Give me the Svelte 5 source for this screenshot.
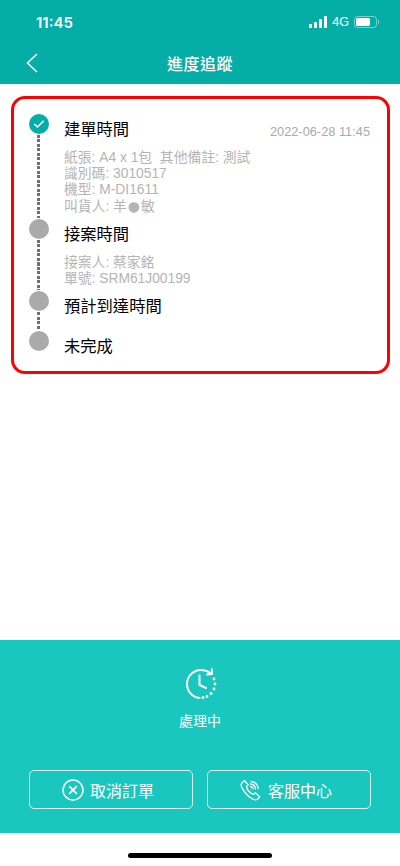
<script>
  const steps = [
    {
      title: "建單時間",
      done: true,
      time: "2022-06-28 11:45",
      lines: ["紙張: A4 x 1包  其他備註: 測試", "識別碼: 3010517", "機型: M-DI1611", "叫貨人: 羊●敏"],
    },
    { title: "接案時間", lines: ["接案人: 蔡家銘", "單號: SRM61J00199"] },
    { title: "預計到達時間", lines: [] },
    { title: "未完成", lines: [] },
  ];
</script>

<div class="page">
  <header>
    <div class="status">
      <span class="clock">11:45</span>
      <div class="indicators">
        <svg width="18" height="12" viewBox="0 0 18 12">
          <rect x="0" y="8" width="3" height="4" rx="0.7" fill="#fff" />
          <rect x="5" y="6" width="3" height="6" rx="0.7" fill="#fff" />
          <rect x="10" y="3" width="3" height="9" rx="0.7" fill="#fff" />
          <rect x="15" y="0" width="3" height="12" rx="0.7" fill="#fff" />
        </svg>
        <span class="net">4G</span>
        <svg width="26" height="12" viewBox="0 0 26 12">
          <rect x="0.5" y="0.5" width="22" height="11" rx="3" fill="none" stroke="#fff" stroke-opacity="0.45" />
          <rect x="2" y="2" width="14" height="8" rx="1.6" fill="#fff" />
          <path d="M24 4v4c.8-.3 1.3-1.100 1.300-2s-.5-1.700-1.300-2z" fill="#fff" fill-opacity="0.5" />
        </svg>
      </div>
    </div>
    <div class="nav">
      <svg class="back" width="12" height="20" viewBox="0 0 12 20">
        <path d="M11 1 1.500 10 11 19" fill="none" stroke="#fff" stroke-width="1.600" />
      </svg>
      <h1>進度追蹤</h1>
    </div>
  </header>

  <main>
    <section class="card">
      {#each steps as step, i}
        <div class="step">
          <div class="rail">
            <div class="dot" class:done={step.done}>
              {#if step.done}
                <svg width="12" height="10" viewBox="0 0 14 11">
                  <path d="M1.500 5.500 5.200 9 12.500 1.800" fill="none" stroke="#fff" stroke-width="1.800" />
                </svg>
              {/if}
            </div>
            {#if i < steps.length - 1}
              <div class="dash"></div>
            {/if}
          </div>
          <div class="body">
            <div class="head">
              <span class="title">{step.title}</span>
              {#if step.time}<span class="time">{step.time}</span>{/if}
            </div>
            {#if step.lines.length}
              <div class="lines">
                {#each step.lines as line}
                  <div>
                    {#each line.split("●") as part, j}{#if j}<span class="mask">●</span>{/if}{part}{/each}
                  </div>
                {/each}
              </div>
            {/if}
          </div>
        </div>
      {/each}
    </section>
  </main>

  <footer>
    <svg class="state-icon" width="32" height="32" viewBox="0 0 32 32" fill="none" stroke="#fff" stroke-width="2" stroke-linecap="round" stroke-linejoin="round">
      <path d="M14.500 30A14 14 0 0 1 2 16 14 14 0 0 1 16 2c3.500 0 7 1.200 10 3.500" />
      <path d="M26.800 1.200 27 6l-4.800.6" />
      <path d="M14.500 7.500V17l6.500 3" />
      <g fill="#fff" stroke="none">
        <circle cx="29" cy="11" r="1.400" />
        <circle cx="30" cy="16" r="1.400" />
        <circle cx="29" cy="21" r="1.400" />
        <circle cx="26" cy="25.500" r="1.400" />
        <circle cx="22" cy="28.500" r="1.400" />
        <circle cx="18" cy="29.700" r="1.400" />
      </g>
    </svg>
    <div class="state">處理中</div>
    <div class="actions">
      <button>
        <svg width="22" height="22" viewBox="0 0 22 22" fill="none" stroke="#fff" stroke-width="1.500">
          <circle cx="11" cy="11" r="10" />
          <path d="M7.200 7.200l7.600 7.600M14.800 7.200l-7.600 7.600" stroke-width="1.700" />
        </svg>
        取消訂單
      </button>
      <button>
        <svg width="22" height="22" viewBox="0 0 22 22" fill="none" stroke="#fff" stroke-width="1.300" stroke-linejoin="round" stroke-linecap="round">
          <path d="M1.500 4.500 4.500 1.500l3.700 4.300-1.800 2c.8 2.800 3.800 6.400 7 7.600l2-1.700 4.400 4.100-2.600 2.700c-1.200.6-3.300.3-5.500-1C7.600 17.300 3 11.700 1.400 7.500c-.4-1.200-.4-2.200.1-3z" />
          <path d="M10.500 5c2.700.2 4.600 2 5 4.800M11 2.500c3.900.3 6.700 3 7.200 7M10.500 7.500c1.300.1 2.200 1 2.500 2.300" />
        </svg>
        客服中心
      </button>
    </div>
  </footer>
  <div class="home"><span></span></div>
</div>

<style>
  :global(body) {
    margin: 0;
    background: #fff;
  }
  .page {
    display: flex;
    flex-direction: column;
    height: 866px;
    font-family: "Liberation Sans", "Noto Sans CJK TC", sans-serif;
  }
  header {
    height: 84px;
    background: #04aea7;
    color: #fff;
    flex: none;
  }
  .status {
    display: flex;
    justify-content: space-between;
    align-items: center;
    height: 44px;
    padding: 0 20px 0 36px;
  }
  .clock {
    font-family: Inter, sans-serif;
    font-size: 15px;
    font-weight: 600;
  }
  .indicators {
    display: flex;
    align-items: center;
    gap: 5px;
  }
  .net {
    font-size: 12.500px;
  }
  .nav {
    position: relative;
    height: 40px;
    display: flex;
    align-items: center;
    justify-content: center;
  }
  .back {
    position: absolute;
    left: 26px;
    top: 9px;
  }
  h1 {
    margin: 0;
    font-size: 16px;
    font-weight: 500;
    letter-spacing: 0.5px;
    position: relative;
    top: -1px;
  }
  main {
    flex: 1;
    padding: 12px 10px 0 11px;
  }
  .card {
    border: 3px solid #f00;
    border-radius: 14px;
    padding: 15px 17px 0 15px;
  }
  .step {
    display: flex;
    gap: 15px;
  }
  .rail {
    width: 20px;
    flex: none;
    display: flex;
    flex-direction: column;
    align-items: center;
  }
  .dot {
    width: 20px;
    height: 20px;
    border-radius: 50%;
    background: #aaa;
    flex: none;
    display: flex;
    align-items: center;
    justify-content: center;
  }
  .dot.done {
    background: #04aea7;
  }
  .dash {
    flex: 1;
    width: 3px;
    margin: 1px 2px 1px 0;
    background: repeating-linear-gradient(#707070 0 3px, transparent 3px 4.500px);
  }
  .body {
    flex: 1;
    min-width: 0;
    min-height: 40px;
  }
  .head {
    display: flex;
    justify-content: space-between;
    align-items: center;
    height: 28px;
  }
  .title {
    font-size: 16.300px;
    color: #000;
  }
  .time {
    font-size: 12.800px;
    color: #aaa;
    position: relative;
    top: 3px;
  }
  .lines {
    padding: 8px 0 3.700px;
    font-size: 13.800px;
    line-height: 16.200px;
    color: #b4b4b4;
    white-space: pre;
  }
  .mask {
    font-family: "DejaVu Sans", sans-serif;
    line-height: 0;
    padding: 0 1px;
  }
  footer {
    height: 193px;
    flex: none;
    background: #1ac7bf;
    color: #fff;
    display: flex;
    flex-direction: column;
    align-items: center;
    padding-top: 28px;
    box-sizing: border-box;
  }
  .state-icon {
    margin-left: 1px;
    flex: none;
  }
  .state {
    margin-top: 12px;
    font-size: 14px;
    line-height: 18px;
  }
  .actions {
    display: flex;
    gap: 14px;
    margin-top: 40px;
  }
  button {
    width: 164px;
    height: 39px;
    box-sizing: border-box;
    border: 1.500px solid rgba(255, 255, 255, 0.85);
    border-radius: 5px;
    background: transparent;
    color: #fff;
    font-family: inherit;
    font-size: 16px;
    display: flex;
    align-items: center;
    justify-content: center;
    gap: 6px;
    padding: 0 6px 0 0;
  }
  .home {
    flex: none;
    height: 33px;
    box-sizing: border-box;
    display: flex;
    justify-content: center;
    padding-top: 20px;
  }
  .home span {
    width: 144px;
    height: 5px;
    border-radius: 3px;
    background: #000;
  }
</style>
